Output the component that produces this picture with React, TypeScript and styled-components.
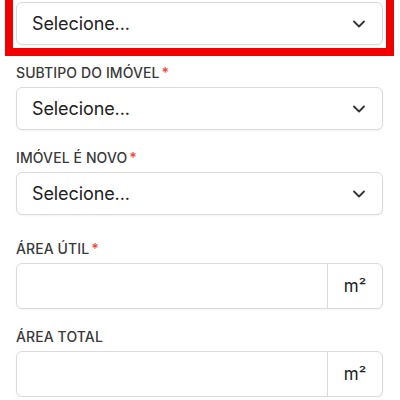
import React from "react";
import styled, { createGlobalStyle } from "styled-components";

const Global = createGlobalStyle`
  html, body { margin: 0; padding: 0; background: #ffffff; }
  body { font-family: Inter, "Noto Sans", sans-serif; }
`;

const Form = styled.div`
  display: flex;
  flex-direction: column;
  padding: 2px 17px 0 16px;
`;

const Field = styled.div<{ $gap: number }>`
  display: flex;
  flex-direction: column;
  margin-top: ${(p) => p.$gap}px;
`;

const Label = styled.label`
  font-family: Inter, "Noto Sans", sans-serif;
  font-size: 14px;
  font-weight: 500;
  line-height: 14px;
  color: #3a3a3a;
  letter-spacing: 0.1px;
  margin-bottom: 7px;
  text-transform: uppercase;
`;

const Req = styled.span`
  color: #f0473e;
  margin-left: 2px;
  font-weight: 600;
`;

const SelectBox = styled.div<{ $highlight?: boolean }>`
  position: relative;
  height: 43px;
  box-sizing: border-box;
  border: 1px solid #dadada;
  border-radius: 6px;
  box-shadow: 0 1px 2px rgba(0, 0, 0, 0.05);
  display: flex;
  align-items: center;
  justify-content: space-between;
  padding: 0 17px 0 15px;
  background: #fff;
  ${(p) =>
    p.$highlight
      ? `&::after {
    content: "";
    position: absolute;
    inset: -12px;
    border: 8px solid #f20000;
    pointer-events: none;
  }`
      : ""}
`;

const SelectText = styled.span`
  font-size: 18px;
  color: #222;
  letter-spacing: -0.1px;
`;

const InputGroup = styled.div`
  height: 46px;
  box-sizing: border-box;
  border: 1px solid #dadada;
  border-radius: 6px;
  box-shadow: 0 1px 2px rgba(0, 0, 0, 0.05);
  display: flex;
  background: #fff;
  overflow: hidden;
`;

const Input = styled.div`
  flex: 1;
`;

const Addon = styled.div`
  width: 54px;
  border-left: 1px solid #dadada;
  display: flex;
  align-items: center;
  justify-content: center;
  font-size: 17px;
  color: #222;
`;

const Chevron = () => (
  <svg width="12" height="8" viewBox="0 0 12 8">
    <polyline points="1,1.5 6,6.5 11,1.5" fill="none" stroke="#333" strokeWidth="1.8" strokeLinecap="round" strokeLinejoin="round" />
  </svg>
);

const Select = ({ highlight }: { highlight?: boolean }) => (
  <SelectBox $highlight={highlight}>
    <SelectText>Selecione...</SelectText>
    <Chevron />
  </SelectBox>
);

export default function App() {
  return (
    <>
      <Global />
      <Form>
        <Select highlight />
        <Field $gap={21}>
          <Label>
            Subtipo do imóvel<Req>*</Req>
          </Label>
          <Select />
        </Field>
        <Field $gap={21}>
          <Label>
            Imóvel é novo<Req>*</Req>
          </Label>
          <Select />
        </Field>
        <Field $gap={27}>
          <Label>
            Área útil<Req>*</Req>
          </Label>
          <InputGroup>
            <Input />
            <Addon>m²</Addon>
          </InputGroup>
        </Field>
        <Field $gap={21}>
          <Label>Área total</Label>
          <InputGroup>
            <Input />
            <Addon>m²</Addon>
          </InputGroup>
        </Field>
      </Form>
    </>
  );
}
